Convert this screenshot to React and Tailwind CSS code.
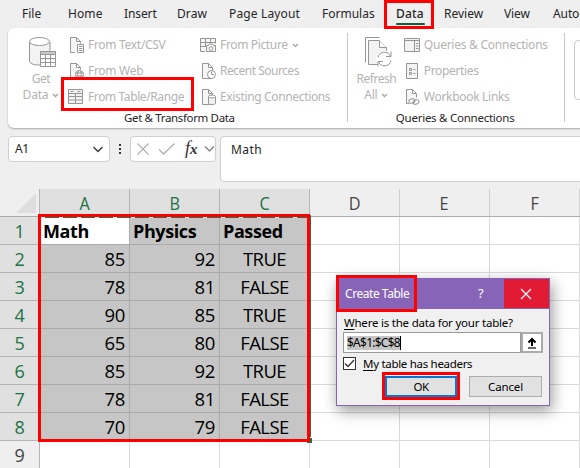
import clsx from 'clsx'

const tabs = [
    { name: 'File', className: 'w-[46px]' },
    { name: 'Home', className: 'w-[56px] tracking-[0.1px]' },
    { name: 'Insert', className: 'w-[53px] tracking-[-0.1px]' },
    { name: 'Draw', className: 'w-[52px] tracking-[0.1px]' },
    { name: 'Page Layout', className: 'w-[93px] tracking-[0.15px]' },
    { name: 'Formulas', className: 'w-[74px]' },
    { name: 'Data', className: 'w-[48px] font-medium tracking-[0.2px]' },
    { name: 'Review', className: 'w-[60px]' },
    { name: 'View', className: 'w-[49px] tracking-[-0.1px]' },
    { name: 'Auto', className: 'w-[27px] tracking-[-0.1px]' },
]

const columns = ['A', 'B', 'C', 'D', 'E', 'F']

const rows = [
    ['Math', 'Physics', 'Passed'],
    ['85', '92', 'TRUE'],
    ['78', '81', 'FALSE'],
    ['90', '85', 'TRUE'],
    ['65', '80', 'FALSE'],
    ['85', '92', 'TRUE'],
    ['78', '81', 'FALSE'],
    ['70', '79', 'FALSE'],
    [],
]

export default function App() {
    return (
        <div className="relative w-[580px] h-[468px] overflow-hidden bg-[#efefef] font-['Noto_Sans',sans-serif] text-[#262626]">
            <TabBar />
            <Ribbon />
            <FormulaBar />
            <Sheet />
            <CreateTableDialog />
        </div>
    )
}

function TabBar() {
    return (
        <div className="relative flex h-[28px] pl-[22px] text-[12px] leading-[28px] whitespace-nowrap">
            {tabs.map(tab => (
                <div key={tab.name} className={clsx('shrink-0', tab.className)}>
                    {tab.name}
                </div>
            ))}
            <div className="absolute left-[396px] top-[23px] w-[29px] h-[2px] rounded-full bg-[#185c37]" />
            <div className="absolute z-10 left-[384px] top-0 w-[50px] h-[29px] border-3 border-[#ff0000]" />
        </div>
    )
}

function Ribbon() {
    return (
        <div className="relative flex ml-[8px] w-[600px] h-[100px] bg-white rounded-[6px] shadow-[0_1px_2px_#a8a8a8] text-[12px] text-[#b3b3b3] whitespace-nowrap">

            {/* Get & Transform Data */}
            <div className="w-[338px] shrink-0">
                <div className="flex h-[82px]">
                    <div className="w-[60px] pl-[6px] pt-[9px] flex flex-col items-center">
                        <div className="pl-[4px]"><GetDataIcon /></div>
                        <div className="h-[16px] mt-[2px] leading-[16px] tracking-[-0.5px]">Get</div>
                        <div className="h-[16px] flex items-center gap-[4px] tracking-[-0.2px]">Data <Caret /></div>
                    </div>
                    <div className="w-[132px] pt-[4px]">
                        <Command icon={<TextFileIcon />} label="From Text/CSV" className="tracking-[-0.3px]" />
                        <Command icon={<WebFileIcon />} label="From Web" className="tracking-[-0.3px]" />
                        <Command icon={<TableIcon />} label="From Table/Range" className="tracking-[-0.4px]" />
                    </div>
                    <div className="pt-[4px]">
                        <Command icon={<PictureIcon />} label="From Picture" className="tracking-[-0.35px]" caret />
                        <Command icon={<RecentIcon />} label="Recent Sources" className="tracking-[-0.5px]" />
                        <Command icon={<ConnectionIcon />} label="Existing Connections" className="tracking-[-0.35px]" />
                    </div>
                </div>
                <div className="pl-[116px] leading-[16px] text-[11.5px] text-[#262626] tracking-[-0.35px]">
                    Get &amp; Transform Data
                </div>
            </div>

            <div className="w-px h-[89px] mt-[5px] ml-[1px] bg-[#c8c8c8]" />

            {/* Queries & Connections */}
            <div className="w-[216px] shrink-0">
                <div className="flex h-[82px]">
                    <div className="w-[56px] pl-[1px] pt-[9px] flex flex-col items-center">
                        <div className="pl-[7px]"><RefreshIcon /></div>
                        <div className="h-[16px] mt-[2px] leading-[16px] tracking-[-0.5px]">Refresh</div>
                        <div className="h-[16px] flex items-center gap-[4px] tracking-[-0.2px]">All <Caret /></div>
                    </div>
                    <div className="pt-[4px]">
                        <Command icon={<PaneIcon />} label="Queries & Connections" className="tracking-[-0.25px]" />
                        <Command icon={<PropertiesIcon />} label="Properties" className="tracking-[-0.35px]" />
                        <Command icon={<LinksIcon />} label="Workbook Links" className="tracking-[-0.3px]" />
                    </div>
                </div>
                <div className="pl-[48px] leading-[16px] text-[11.5px] text-[#262626] tracking-[-0.25px]">
                    Queries &amp; Connections
                </div>
            </div>

            <div className="w-px h-[89px] mt-[5px] bg-[#c8c8c8]" />
            <div className="w-[40px] h-[60px] mt-[12px] ml-[9px] border border-[#c8c8c8] rounded-[4px]" />

            <div className="absolute left-[53px] top-[49px] w-[133px] h-[34px] border-3 border-[#ff0000]" />
        </div>
    )
}

function Command({ icon, label, className, caret }) {
    return (
        <div className="flex h-[26px] items-center">
            <div className="w-[20px] shrink-0">{icon}</div>
            <span className={className}>{label}</span>
            {caret && <span className="ml-[4px] flex"><Caret /></span>}
        </div>
    )
}

function FormulaBar() {
    return (
        <div className="flex h-[61px] pt-[8px] pl-[8px] text-[12px]">
            <div className="w-[102px] h-[26px] shrink-0 flex items-center justify-between pl-[6px] pr-[5px] bg-white border border-[#cfcfcf] rounded-[4px]">
                <span className="tracking-[-0.5px]">A1</span>
                <svg width="12" height="8" viewBox="0 0 12 8" fill="none" stroke="#333" strokeWidth="1.3"><path d="M1.500 2l4.500 4.500L10.500 2" /></svg>
            </div>
            <div className="w-[20px] h-[26px] shrink-0 flex flex-col items-center justify-center gap-[2px]">
                <i className="w-[2px] h-[2px] bg-[#333]" />
                <i className="w-[2px] h-[2px] bg-[#333]" />
                <i className="w-[2px] h-[2px] bg-[#333]" />
            </div>
            <div className="w-[86px] h-[26px] shrink-0 flex items-center bg-white border border-[#cfcfcf] rounded-[4px]">
                <svg className="ml-[5px] shrink-0" width="14" height="14" viewBox="0 0 14 14" fill="none" stroke="#b0b0b0" strokeWidth="1.2"><path d="M1.500 1.500l11 11M12.500 1.500l-11 11" /></svg>
                <svg className="ml-[8px] shrink-0" width="18" height="14" viewBox="0 0 18 14" fill="none" stroke="#b0b0b0" strokeWidth="1.3"><path d="M1 7.500l4.500 4.500L16.500 1.500" /></svg>
                <span className="ml-[9px] w-[18px] shrink-0 -mt-[2px] font-['Liberation_Serif',serif] italic text-[18px] leading-[20px] text-[#333]">f<span className="text-[15px] font-bold">x</span></span>
                <svg className="ml-[1px] shrink-0" width="11" height="8" viewBox="0 0 11 8" fill="none" stroke="#777" strokeWidth="1.2"><path d="M1 1.500l4.500 4.500L10 1.500" /></svg>
            </div>
            <div className="w-[370px] h-[46px] shrink-0 ml-[4px] pl-[10px] bg-white border border-[#cfcfcf] rounded-l-[4px] leading-[25px] tracking-[0.4px]">
                Math
            </div>
        </div>
    )
}

function Sheet() {
    return (
        <div className="relative w-[580px] font-['Open_Sans',sans-serif]">
            <div className="flex h-[28px] border-b border-[#ababab]">
                <div className="w-[40px] shrink-0 border-r border-[#b5b5b5] flex items-end justify-end pr-[3px] pb-[3px]">
                    <svg width="20" height="20" viewBox="0 0 20 20"><path d="M20 0v20H0z" fill="#dedede" /></svg>
                </div>
                {columns.map((col, i) => (
                    <div
                        key={col}
                        className={clsx(
                            'w-[90px] shrink-0 border-r text-center text-[18px] leading-[29px]',
                            i < 3 ? 'bg-[#e0e0e0] border-[#b5b5b5] text-[#217346]' : 'border-[#d0d0d0] text-[#444]'
                        )}
                    >
                        <span className="inline-block scale-x-90">{col}</span>
                    </div>
                ))}
            </div>

            {rows.map((row, r) => (
                <div key={r} className="flex h-[28px]">
                    <div
                        className={clsx(
                            'w-[40px] shrink-0 border-r border-b border-[#b5b5b5] text-center text-[18px] leading-[28px] tracking-[-0.3px]',
                            r < 8 ? 'bg-[#e0e0e0] text-[#217346]' : 'text-[#444]'
                        )}
                    >
                        {r + 1}
                    </div>
                    {columns.map((col, c) => (
                        <Cell key={col} value={row[c]} row={r} col={c} />
                    ))}
                </div>
            ))}

            {/* Copy range border and fill handle */}
            <div className="absolute left-[41px] top-[28px] w-[266px] h-px bg-[#217346] bg-[repeating-linear-gradient(90deg,#fff_0_4px,#217346_4px_18px)]" />
            <div className="absolute left-[310px] top-[26px] w-px h-[222px] bg-[#217346]" />
            <div className="absolute left-[306px] top-[248px] w-[6px] h-[6px] border-t border-l border-white bg-[#217346]" />
            <div className="absolute left-[38px] top-[25px] w-[272px] h-[228px] border-3 border-[#ff0000]" />
        </div>
    )
}

function Cell({ value, row, col }) {
    const selected = row < 8 && col < 3
    const header = row === 0

    return (
        <div
            className={clsx(
                'w-[90px] shrink-0 border-r border-b leading-[28px] text-black whitespace-nowrap',
                selected ? 'border-[#ababab]' : 'border-[#dadada]',
                selected && (header && col === 0 ? 'bg-white' : 'bg-[#c6c6c6]'),
                !selected && 'bg-white',
                header ? 'pl-[3px] font-bold text-[18px] tracking-[-0.4px]' : 'text-[18.5px]',
                !header && col < 2 && 'pr-[4px] text-right tracking-[-0.3px]',
                !header && col === 2 && 'text-center tracking-[-0.6px]'
            )}
        >
            {value}
        </div>
    )
}

function CreateTableDialog() {
    return (
        <div className="absolute left-[336px] top-[278px] w-[214px] h-[128px] bg-[#f0f0f0] border border-[#8764b8] shadow-[2px_5px_14px_rgba(0,0,0,0.4)] text-[12px] text-black whitespace-nowrap">
            <div className="flex h-[30px] bg-[#8764b8] text-white leading-[30px]">
                <div className="w-[131px] shrink-0 pl-[8px] tracking-[-0.45px]">Create Table</div>
                <div className="w-[36px] shrink-0 pl-[10px] text-[13px] leading-[28px]">?</div>
                <div className="w-[45px] h-[29px] shrink-0 bg-[#e01b33] flex items-center justify-center pr-[1px]">
                    <svg width="12" height="12" viewBox="0 0 12 12" fill="none" stroke="#fff" strokeWidth="1.2"><path d="M1 1l10 10M11 1L1 11" /></svg>
                </div>
            </div>

            <div className="h-[23px] pl-[7px] text-[11.5px] leading-[28px] tracking-[-0.22px]">
                <span className="underline underline-offset-2">W</span>here is the data for your table?
            </div>

            <div className="flex h-[21px] ml-[6px]">
                <div className="w-[178px] h-[21px] flex items-center bg-white border border-[#9a9a9a] pl-[3px]">
                    <span className="h-[14px] leading-[14px] bg-[#c6c6c6] border-r border-black tracking-[-0.75px]">$A$1:$C$8</span>
                </div>
                <div className="w-[22px] h-[21px] flex items-center justify-center bg-white border-2 border-[#ababab]">
                    <svg width="10" height="12" viewBox="0 0 10 12" fill="none" stroke="#000" strokeWidth="2"><path d="M5 9V2M1.500 5.500L5 2l3.500 3.500" /><path d="M1 11h8" strokeWidth="1.200" /></svg>
                </div>
            </div>

            <div className="flex h-[21px] items-center ml-[6px] text-[11.5px]">
                <span className="w-[13px] h-[13px] border border-[#333] bg-white flex items-center justify-center">
                    <svg width="11" height="9" viewBox="0 0 11 9" fill="none" stroke="#333" strokeWidth="1.3"><path d="M1 4.500l3 3L10 1" /></svg>
                </span>
                <span className="ml-[7px] tracking-[-0.3px]"><span className="underline underline-offset-2">M</span>y table has headers</span>
            </div>

            <div className="flex text-[11.5px] leading-[18px] text-center">
                <div className="-mt-[2px] ml-[45px] w-[78px] h-[28px] border-3 border-[#ff0000] pt-[1px]">
                    <div className="h-[21px] border-2 border-[#0078d7] bg-[#e1e1e1] tracking-[-0.5px]">OK</div>
                </div>
                <div className="mt-[2px] ml-[9px] w-[73px] h-[21px] border border-[#adadad] bg-[#e1e1e1] leading-[20px] tracking-[-0.15px]">Cancel</div>
            </div>

            <div className="absolute left-[-1px] top-[-4px] w-[81px] h-[37px] border-3 border-[#ff0000]" />
        </div>
    )
}

function Icon({ children, size = 16 }) {
    return (
        <svg width={size} height={size} viewBox={`0 0 ${size} ${size}`} fill="none" stroke="#969696" strokeWidth="1">
            {children}
        </svg>
    )
}

function Caret() {
    return (
        <svg width="7" height="5" viewBox="0 0 7 5" fill="none" stroke="#a5a5a5" strokeWidth="1.3">
            <path d="M1 1l2.500 2.500L6 1" />
        </svg>
    )
}

// Folded page used by the file based commands
function Page() {
    return <path d="M2.500 .5h6l4 4v11h-10zM8.500 .5v4h4" fill="#f6f6f6" />
}

function TextFileIcon() {
    return (
        <Icon>
            <path d="M2.500 15.500V.5h6l4 4v11z" fill="#f6f6f6" stroke="none" />
            <path d="M7 15.500H2.500V.5h6l4 4v2M8.500 .5v4h4" />
            <path d="M9.500 7.500h6v8h-6z" fill="#fff" />
            <path d="M11 9.500h3.500M11 11.500h3.500M11 13.500h3.500" />
        </Icon>
    )
}

function WebFileIcon() {
    return (
        <Icon>
            <path d="M6 15.500H2.500V.5h6l4 4v2M8.500 .5v4h4" fill="#f6f6f6" />
            <circle cx="11.500" cy="11.500" r="4" fill="#fff" />
            <ellipse cx="11.500" cy="11.500" rx="1.800" ry="4" />
            <path d="M7.500 10h8M7.500 13h8" />
        </Icon>
    )
}

function TableIcon() {
    return (
        <Icon>
            <path d="M.5 .5h14v14H.5z" fill="#f3f3f3" />
            <path d="M.5 4.500h14M.5 7.500h14M.5 11h14M7.500 4.500v10" />
            <path d="M2.500 2.500h3M9.500 2.500h3" />
        </Icon>
    )
}

function PictureIcon() {
    return (
        <Icon>
            <path d="M.5 1.500h15v13H.5z" fill="#f6f6f6" stroke="none" />
            <path d="M5 14.500H.5v-13h15v5M.5 5.500h15M.5 9.500h5M5.500 1.500v8M10.500 1.500v5" />
            <path d="M6.500 8.500h2l1-1.500h3l1 1.500h2v6h-9z" fill="#f3f3f3" />
            <circle cx="11" cy="11.500" r="1.800" fill="#fff" />
        </Icon>
    )
}

function RecentIcon() {
    return (
        <Icon>
            <Page />
            <circle cx="11.500" cy="11.500" r="4" fill="#fff" />
            <path d="M11.500 8.500v3h2.500" />
        </Icon>
    )
}

function ConnectionIcon() {
    return (
        <Icon>
            <Page />
            <path d="M8.500 7.500v7c0 1.300 7 1.300 7 0v-7" fill="#f3f3f3" />
            <ellipse cx="12" cy="7.500" rx="3.500" ry="1.500" fill="#fff" />
        </Icon>
    )
}

function PaneIcon() {
    return (
        <Icon>
            <path d="M.5 1.500h15v13H.5z" fill="#f3f3f3" />
            <path d="M.5 3.500h15M10.500 3.500v11M12 6.500h2.500M12 9h2.500M12 11.500h2.500" />
        </Icon>
    )
}

function PropertiesIcon() {
    return (
        <Icon>
            <path d="M2.500 .5h11v15h-11z" fill="#f3f3f3" />
            <path d="M5.500 5.500h2v2h-2zM5.500 9.500h2v2h-2zM9.500 6.500h2M9.500 10.500h2" />
        </Icon>
    )
}

function LinksIcon() {
    return (
        <Icon>
            <path d="M5 14.500H2.500V.5h6l4 4v4M8.500 .5v4h4" fill="#f6f6f6" />
            <rect x="5" y="10" width="6" height="4" rx="2" transform="rotate(-15 8 12)" fill="#fff" />
            <rect x="9" y="11" width="6" height="4" rx="2" transform="rotate(-15 12 13)" />
        </Icon>
    )
}

function GetDataIcon() {
    return (
        <svg width="28" height="32" viewBox="0 0 28 32" fill="none" stroke="#969696">
            <path d="M.5 5v19c0 2.500 4 4 10 4h1V15h9.500V5" fill="#f3f3f3" />
            <ellipse cx="10.500" cy="4.500" rx="10" ry="4" fill="#fff" />
            <path d="M11.500 14.500h15v15h-15z" fill="#fff" />
            <path d="M11.500 14.500h15v3h-15z" fill="#c8c8c8" />
            <path d="M11.500 21.500h15M11.500 25.500h15M16.500 17.500v12M21.500 17.500v12" />
        </svg>
    )
}

function RefreshIcon() {
    return (
        <svg width="30" height="32" viewBox="0 0 30 32" fill="none" stroke="#969696">
            <path d="M.5 25.500V.5h14" />
            <path d="M3.500 3.500h11l7 7v17h-18z" fill="#f3f3f3" />
            <path d="M14.500 3.500v7h7" fill="#fff" />
            <circle cx="19.500" cy="22" r="8.500" fill="#fff" stroke="none" />
            <path d="M13 20.500a6.500 6.500 0 0 1 12.500-1M26 23.500a6.500 6.500 0 0 1-12.500 1" />
            <path d="M26 14.500v5h-5M13 29.500v-5h5" />
        </svg>
    )
}
